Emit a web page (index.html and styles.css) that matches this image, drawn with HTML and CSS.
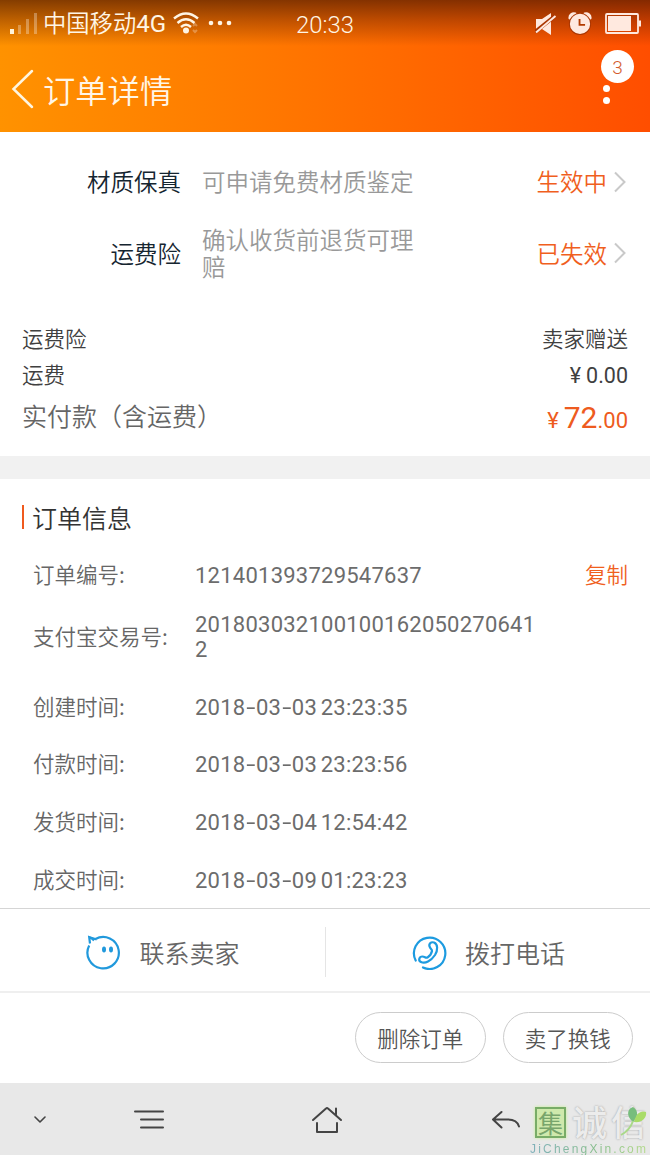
FILE: index.html
```html
<!DOCTYPE html>
<html lang="zh-CN">
<head>
    <meta charset="UTF-8">
    <meta name="viewport" content="width=device-width, initial-scale=1.0">
    <title>订单详情</title>
    <link rel="stylesheet" href="styles.css">
</head>
<body>
    <header class="header">
        <div class="status-bar">
            <div class="status-left">
                <svg class="signal" width="30" height="24" viewBox="0 0 30 24">
                    <rect x="1" y="18" width="4" height="5" fill="#fff3d8"/>
                    <g fill="#fff" opacity=".3">
                        <rect x="9" y="14" width="3" height="9"/>
                        <rect x="17" y="8" width="3" height="15"/>
                        <rect x="25" y="2" width="3" height="21"/>
                    </g>
                </svg>
                <span class="carrier">中国移动<span class="net">4G</span></span>
                <svg class="wifi" width="26" height="22" viewBox="0 0 26 22" fill="none" stroke="#fff5e4" stroke-width="2.4">
                    <path d="M1 6.5Q13-3.5 25 6.5M4.5 11Q13 3.5 21.5 11M8 15Q13 10.5 18 15"/>
                    <circle cx="13" cy="18.5" r="3" fill="#fff5e4" stroke="none"/>
                    <path d="M20 14l2-2 2 2M20 18l2 2 2-2" opacity=".3" stroke-width="2"/>
                </svg>
                <svg class="more" width="24" height="6" viewBox="0 0 24 6" fill="#fff5e4">
                    <circle cx="3" cy="3" r="2.3"/><circle cx="12" cy="3" r="2.3"/><circle cx="21" cy="3" r="2.3"/>
                </svg>
            </div>
            <span class="clock">20:33</span>
            <div class="status-right">
                <svg width="22" height="24" viewBox="0 0 22 24">
                    <path d="M1 7h6l9-6v22l-9-6H1z" fill="#ffe9df"/>
                    <path d="M0 20L20 4" stroke="#a93500" stroke-width="4"/>
                    <path d="M1 20.500L20.500 4" stroke="#ffe9df" stroke-width="2"/>
                </svg>
                <svg width="24" height="23" viewBox="0 0 26 25">
                    <path d="M1.500 7A5 5 0 0 1 8 1.500zM24.500 7A5 5 0 0 0 18 1.500z" fill="#ffe9df" stroke="#ffe9df" stroke-width="2" stroke-linejoin="round"/>
                    <circle cx="13" cy="13" r="12" fill="#a93500"/>
                    <circle cx="13" cy="13" r="11" fill="#ffe9df"/>
                    <path d="M12.500 7.500v6.500h6" fill="none" stroke="#b33b00" stroke-width="2"/>
                </svg>
                <svg width="36" height="22" viewBox="0 0 36 22">
                    <rect x="1" y="1" width="32" height="19" rx="1" fill="none" stroke="#ffe9df" stroke-width="1.800"/>
                    <rect x="3" y="3" width="23" height="15" fill="#ffe9df"/>
                    <rect x="33.500" y="7.500" width="2.500" height="6" fill="#ffe9df"/>
                </svg>
            </div>
        </div>
        <div class="title-bar">
            <svg class="back" width="24" height="42" viewBox="0 0 24 42" fill="none" stroke="#fff6e0" stroke-width="2.500" stroke-linecap="round">
                <path d="M21 3L2.500 21 21 39"/>
            </svg>
            <h1>订单详情</h1>
            <div class="menu">
                <span class="badge">3</span>
                <i class="dot"></i>
                <i class="dot"></i>
            </div>
        </div>
    </header>

    <section class="services">
        <div class="service">
            <span class="service-name">材质保真</span>
            <span class="service-desc">可申请免费材质鉴定</span>
            <span class="service-state">生效中</span>
            <svg width="14" height="22" viewBox="0 0 14 22" fill="none" stroke="#c9c9c9" stroke-width="2"><path d="M2 1.500L11.500 11 2 20.500"/></svg>
        </div>
        <div class="service">
            <span class="service-name">运费险</span>
            <span class="service-desc">确认收货前退货可理赔</span>
            <span class="service-state">已失效</span>
            <svg width="14" height="22" viewBox="0 0 14 22" fill="none" stroke="#c9c9c9" stroke-width="2"><path d="M2 1.500L11.500 11 2 20.500"/></svg>
        </div>
    </section>

    <section class="costs">
        <div class="cost"><span>运费险</span><span>卖家赠送</span></div>
        <div class="cost"><span>运费</span><span class="price"><span class="yen">¥</span>0.00</span></div>
        <div class="cost total"><span>实付款（含运费）</span><span class="price"><span class="yen">¥</span><b>72</b>.00</span></div>
    </section>

    <section class="order">
        <h2>订单信息</h2>
        <dl>
            <div class="row"><dt>订单编号:</dt><dd>121401393729547637</dd><a class="copy">复制</a></div>
            <div class="row row-tall"><dt>支付宝交易号:</dt><dd>2018030321001001620502706412</dd></div>
            <div class="row"><dt>创建时间:</dt><dd>2018<i>-</i>03<i>-</i>03 23:23:35</dd></div>
            <div class="row"><dt>付款时间:</dt><dd>2018<i>-</i>03<i>-</i>03 23:23:56</dd></div>
            <div class="row"><dt>发货时间:</dt><dd>2018<i>-</i>03<i>-</i>04 12:54:42</dd></div>
            <div class="row"><dt>成交时间:</dt><dd>2018<i>-</i>03<i>-</i>09 01:23:23</dd></div>
        </dl>
    </section>

    <div class="contact">
        <a class="contact-item">
            <svg width="36" height="36" viewBox="0 0 36 36" fill="none" stroke="#2199dc" stroke-width="2.200">
                <path d="M4.200 11.500A15.700 15.700 0 1 0 10.500 5M5 9.500L4.200 3l7.500 2.500M5 3l4 3.500"/>
                <ellipse cx="19" cy="15.500" rx="2" ry="3" fill="#2199dc" stroke="none"/>
                <ellipse cx="26" cy="15.500" rx="2" ry="3" fill="#2199dc" stroke="none"/>
            </svg>
            <span>联系卖家</span>
        </a>
        <a class="contact-item">
            <svg width="36" height="36" viewBox="0 0 36 36" fill="none" stroke="#1d9be0" stroke-width="2.200" stroke-linecap="round">
                <path d="M4.700 26.500A15.700 15.700 0 1 1 12 33.500"/>
                <path d="M19 13.500C17 10 20 7.500 23 8.500C27 10 27 16 24 21C20 27 14 30 10 28C7 26.500 8 22.500 11.500 22.500C14 22.500 14.500 24.500 16.500 23.500C19 22 20.500 19.500 21 17C21.300 15.500 19.700 15 19 13.500Z"/>
            </svg>
            <span>拨打电话</span>
        </a>
    </div>

    <div class="actions">
        <button>删除订单</button>
        <button>卖了换钱</button>
    </div>

    <nav class="navbar">
        <svg class="nav-down" width="14" height="8" viewBox="0 0 14 8"><path d="M2 1l5 5 5-5"/></svg>
        <svg class="nav-menu" width="30" height="20" viewBox="0 0 30 20"><path d="M1 1.500h28M7 9.500h22M7 17.500h22"/></svg>
        <svg class="nav-home" width="32" height="28" viewBox="0 0 32 28"><path d="M2 14L15 2.500Q16 1.500 17 2.500L30 14M6 17v9h20V17M25 2.500v6"/></svg>
        <svg class="nav-back" width="30" height="20" viewBox="0 0 30 20"><path d="M10.500 2L2 9.500l8.500 8M2.500 9.500H17Q26 9.500 28 16.500"/></svg>
    </nav>

    <div class="watermark">
        <div class="watermark-name">
            <span class="seal">集</span><span>诚</span><span>信</span>
            <svg class="leaf" width="28" height="32" viewBox="0 0 28 32">
                <path d="M13 16C6 10 7 3 13 1C19 5 18 11 13 16Z" fill="#77bd7d"/>
                <path d="M14 16C16 7 21 4 26 6C27 12 22 17 14 16Z" fill="#a9dc68"/>
                <path d="M13 15Q10 24 1 29" fill="none" stroke="#a9d989" stroke-width="2"/>
            </svg>
        </div>
        <div class="watermark-url">JiChengXin.com</div>
    </div>
</body>
</html>
```
FILE: styles.css
```css
* {
    box-sizing: border-box;
}
body {
    margin: 0;
    width: 650px;
    height: 1155px;
    display: flex;
    flex-direction: column;
    position: relative;
    overflow: hidden;
    background: #fff;
    color: #666;
    font-family: 'Noto Sans CJK SC', sans-serif;
    font-weight: 350;
}
svg {
    display: block;
    flex: none;
}
h1, h2, dl, dd {
    margin: 0;
    font-weight: 350;
}
.header {
    height: 132px;
    flex: none;
    background: linear-gradient(rgba(80, 25, 0, 0.7), rgba(100, 30, 0, 0.42) 20px, rgba(100, 30, 0, 0) 46px), linear-gradient(90deg, #ff9200, #ff7200 50%, #ff4e00);
    color: #fff6e6;
}
.status-bar {
    height: 46px;
    display: grid;
    grid-template-columns: 275px 100px 275px;
}
.status-left {
    display: flex;
    align-items: center;
    padding: 0 0 2px 9px;
}
.signal {
    margin-top: -2px;
}
.carrier {
    margin: -3px 0 0 4px;
    width: 124px;
    font-size: 23.3px;
    line-height: 40px;
    white-space: nowrap;
}
.net {
    font-family: Roboto, sans-serif;
    font-size: 24px;
    font-weight: 400;
}
.wifi {
    margin: -3px 0 0 6px;
}
.more {
    margin: -2px 0 0 9px;
}
.clock {
    text-align: center;
    font-family: Roboto, sans-serif;
    font-size: 23.8px;
    line-height: 50px;
}
.status-right {
    display: flex;
    align-items: center;
    justify-content: flex-end;
    padding: 0 9px 3px 0;
    gap: 13px;
}
.status-right svg:first-child {
    margin-right: -2px;
}
.title-bar {
    height: 86px;
    display: flex;
    align-items: center;
    padding: 0 18px 0 11px;
}
h1 {
    margin: -1px 0 0 8px;
    font-size: 32.3px;
    line-height: 80px;
}
.menu {
    position: relative;
    margin-left: auto;
    width: 26px;
    height: 60px;
    padding-top: 26px;
}
.badge {
    position: absolute;
    top: -9px;
    left: -5px;
    width: 33px;
    height: 33px;
    border-radius: 50%;
    background: #fff;
    color: #d35b2b;
    font-family: Roboto, sans-serif;
    font-size: 19px;
    line-height: 35px;
    text-align: center;
}
.dot {
    display: block;
    width: 7px;
    height: 7px;
    margin: 0 0 5px -3px;
    border-radius: 50%;
    background: #fff;
}
.services {
    height: 174px;
    flex: none;
    padding: 21px 23px 0 0;
}
.service {
    display: grid;
    grid-template-columns: 181px 214px 1fr 14px;
    align-items: center;
    height: 57px;
    font-size: 23.5px;
    line-height: 27px;
}
.service + .service {
    height: 86px;
}
.service-name {
    text-align: right;
    color: #152530;
}
.service-desc {
    margin-left: 21px;
    margin-right: -22px;
    color: #999;
}
.service-state {
    color: #f05f1e;
    text-align: right;
    margin-right: 6px;
}
.costs {
    height: 173px;
    padding: 14px 22px 0;
    border-bottom: 23px solid #f1f1f1;
    flex: none;
}
.cost {
    display: flex;
    justify-content: space-between;
    height: 36px;
    line-height: 36px;
    font-size: 21.5px;
    color: #404040;
}
.price {
    font-family: Roboto, sans-serif;
    font-weight: 400;
    padding-top: 2px;
}
.yen {
    margin-right: 5px;
}
.total {
    height: 47px;
    line-height: 47px;
    font-size: 25px;
    color: #666;
}
.total .price {
    color: #ee5b20;
    font-size: 22px;
}
.total b {
    font-size: 30px;
    font-weight: 400;
}
.order {
    height: 429px;
    flex: none;
    padding: 19px 22px 0;
}
h2 {
    height: 37px;
    margin-bottom: 2px;
    display: flex;
    align-items: center;
    font-size: 25px;
    color: #333;
}
h2::before {
    content: '';
    width: 2px;
    height: 24px;
    margin-right: 8px;
    background: #f05a1e;
}
dl {
    padding-top: 9px;
}
.row {
    display: grid;
    grid-template-columns: 163px 343px 1fr;
    align-items: center;
    height: 57.8px;
    padding-left: 11px;
    font-size: 21.5px;
    line-height: 25px;
}
.row-tall {
    height: 74px;
    padding-bottom: 8px;
}
dt {
    margin-top: -3px;
}
dd {
    margin-left: -1px;
    padding-top: 1px;
    font-family: Roboto, sans-serif;
    font-size: 22px;
    font-weight: 400;
    letter-spacing: 0.24px;
    word-spacing: -2px;
    word-break: break-all;
    color: #6c6c6c;
}
/* the date dashes are drawn wide */
dd i {
    display: inline-block;
    width: 10.6px;
    padding-left: 0.8px;
    font-style: normal;
    transform: scaleX(1.5);
    transform-origin: 0 50%;
}
.copy {
    margin-top: -2px;
    color: #f05f1e;
    text-align: right;
}
.contact {
    display: flex;
    align-items: center;
    height: 85px;
    flex: none;
    border-top: 1px solid #d5d5d5;
    border-bottom: 2px solid #efefef;
}
.contact-item {
    display: flex;
    align-items: center;
    justify-content: center;
    gap: 18px;
    width: 325px;
    height: 50px;
    margin-top: 4px;
    font-size: 25px;
}
.contact-item + .contact-item {
    border-left: 1px solid #e5e5e5;
}
.actions {
    height: 89px;
    margin-bottom: 1px;
    flex: none;
    display: flex;
    align-items: center;
    justify-content: flex-end;
    gap: 17px;
    padding-right: 17px;
}
button {
    width: 130.5px;
    height: 51px;
    padding: 0 0 1px;
    border: 1px solid #ccc;
    border-radius: 26px;
    background: #fff;
    color: #555;
    font-family: inherit;
    font-size: 21.5px;
    font-weight: 350;
}
.navbar {
    flex: 1;
    display: flex;
    align-items: center;
    padding: 1px 0 0 33px;
    background: #e8e8e8;
    fill: none;
    stroke: #444;
    stroke-width: 2;
    stroke-linecap: round;
    stroke-linejoin: round;
}
.nav-down {
    stroke-width: 1.6;
}
.nav-menu {
    margin-left: 87px;
}
.nav-home {
    margin-left: 147px;
}
.nav-back {
    margin-left: 148px;
}
/* site mark over the navigation bar */
.watermark {
    position: absolute;
    left: 530px;
    top: 1104px;
    width: 120px;
}
.watermark-name {
    display: flex;
    gap: 4px;
    height: 38px;
    padding-left: 5px;
    font-size: 35px;
    line-height: 34px;
    font-weight: 500;
    color: #ececec;
    text-shadow: 0 0 2px #999;
}
.seal {
    width: 31px;
    height: 31px;
    margin: 3px 2px 0 0;
    border: 2px solid #78ac67;
    background: #cfe9ac;
    color: #78a56c;
    font-size: 25px;
    font-weight: 400;
    line-height: 26px;
    text-align: center;
    text-shadow: none;
    box-shadow: 0 0 3px #c5ee91;
}
.leaf {
    position: absolute;
    left: 90px;
    top: 2px;
}
.watermark-url {
    padding-top: 1px;
    font-family: 'Liberation Sans', sans-serif;
    font-size: 12px;
    font-weight: 400;
    line-height: 12px;
    letter-spacing: 2.2px;
    white-space: nowrap;
    background: linear-gradient(90deg, #7fb0bb, #86bd8b 55%, #b7dc8c);
    background-clip: text;
    -webkit-background-clip: text;
    color: transparent;
}
```
